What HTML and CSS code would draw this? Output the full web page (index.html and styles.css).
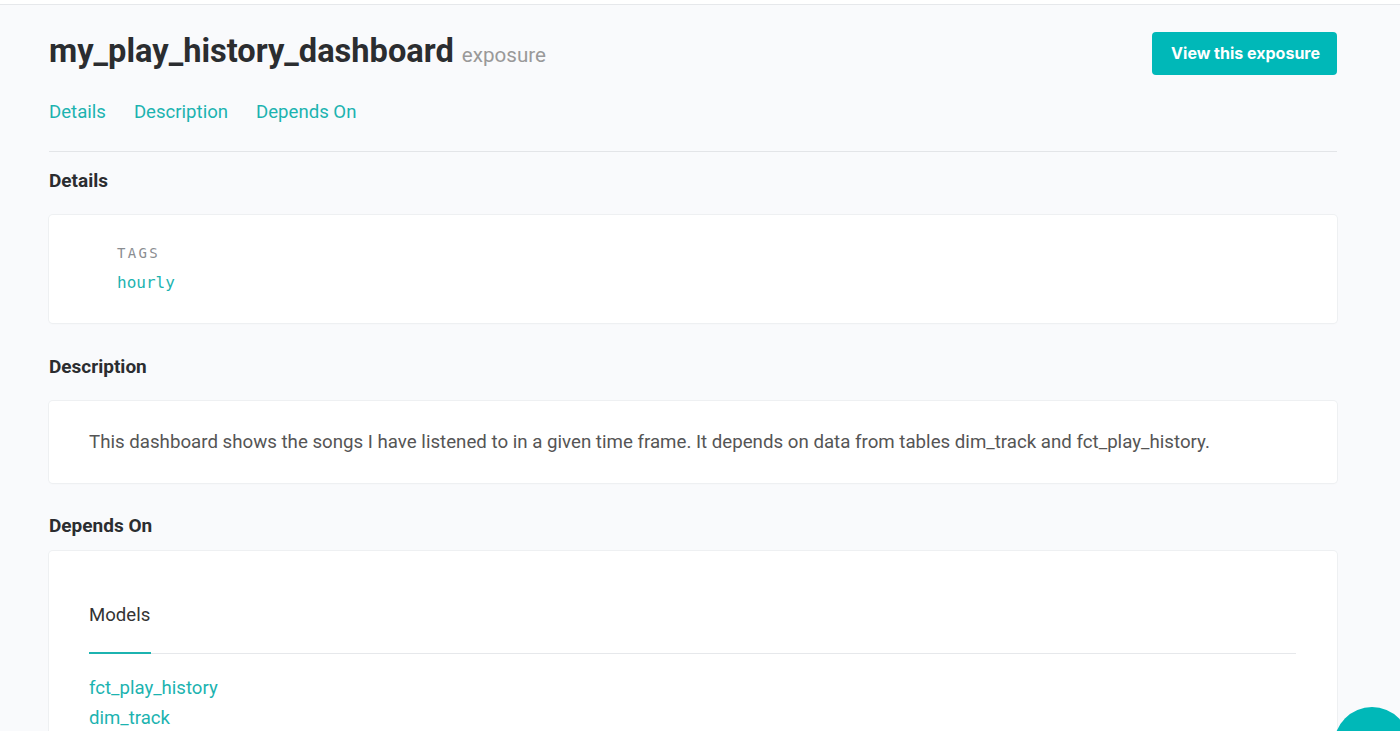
FILE: index.html
```html
<!DOCTYPE html>
<html>
<head>
<meta charset="utf-8">
<link rel="stylesheet" href="styles.css">
</head>
<body>
<div class="topbar"></div>
<main class="page">
  <header class="head">
    <h1 class="title">my_play_history_dashboard <small class="kind">exposure</small></h1>
    <a class="btn">View this exposure</a>
  </header>
  <nav class="tabs">
    <a>Details</a>
    <a>Description</a>
    <a>Depends On</a>
  </nav>
  <section class="sec">
    <h2 class="sec-title">Details</h2>
    <div class="card card-details">
      <div class="detail">
        <div class="label">TAGS</div>
        <div class="value">hourly</div>
      </div>
    </div>
  </section>
  <section class="sec">
    <h2 class="sec-title">Description</h2>
    <div class="card card-desc">
      <p>This dashboard shows the songs I have listened to in a given time frame. It depends on data from tables dim_track and fct_play_history.</p>
    </div>
  </section>
  <section class="sec">
    <h2 class="sec-title">Depends On</h2>
    <div class="card card-deps">
      <div class="subtabs"><span class="subtab active">Models</span></div>
      <ul class="deplist">
        <li><a>fct_play_history</a></li>
        <li><a>dim_track</a></li>
      </ul>
    </div>
  </section>
</main>
<div class="fab"></div>
</body>
</html>
```
FILE: styles.css
```css
* { box-sizing: border-box; }
html, body { margin: 0; padding: 0; }
body {
  background: #f9fafc;
  font-family: Roboto, "Liberation Sans", sans-serif;
  color: #333;
  overflow: hidden;
  height: 731px;
}
.topbar {
  height: 5px;
  background: #fff;
  border-bottom: 1px solid #e6e8eb;
}
.page {
  padding: 0 63px 0 49px;
}
.head {
  display: flex;
  justify-content: space-between;
  align-items: flex-start;
  padding-top: 26px;
}
.title {
  margin: 0;
  font-size: 32.6px;
  font-weight: 700;
  color: #2b2d30;
  line-height: 40px;
}
.kind {
  font-size: 20.6px;
  font-weight: 400;
  color: #999;
}
.btn {
  display: block;
  background: #00b8b8;
  color: #fff;
  font-family: Inter, Roboto, sans-serif;
  font-weight: 700;
  font-size: 16px;
  padding: 0 17px 0 19px;
  height: 43px;
  line-height: 43px;
  border-radius: 4px;
  margin-top: 1px;
}
.tabs {
  display: flex;
  gap: 28px;
  margin-top: 26px;
  padding-bottom: 28px;
  border-bottom: 1px solid #e3e5e8;
}
.tabs a {
  color: #1cb3b0;
  font-size: 18.6px;
  line-height: 22px;
}
.sec-title {
  margin: 0;
  font-size: 19px;
  font-weight: 700;
  color: #2b2d30;
  line-height: 22px;
}
.sec:nth-of-type(1) { padding-top: 18px; }
.sec:nth-of-type(1) .sec-title { margin-bottom: 23px; }
.card {
  background: #fff;
  border-radius: 4px;
  box-shadow: 0 0 0 1px #eef0f2, 0 1px 2px rgba(0,0,0,0.04);
}
.card-details {
  height: 108px;
  padding: 30px 68px;
}
.label {
  font-family: "DejaVu Sans Mono", "Liberation Mono", monospace;
  font-size: 14px;
  letter-spacing: 2.3px;
  color: #8a8d91;
  line-height: 16px;
}
.value {
  font-family: "DejaVu Sans Mono", "Liberation Mono", monospace;
  font-size: 16px;
  color: #1cb3b0;
  margin-top: 12px;
  line-height: 20px;
}
.sec:nth-of-type(2) { padding-top: 33px; }
.sec:nth-of-type(2) .sec-title { margin-bottom: 23px; }
.card-desc {
  height: 82px;
  padding: 0 40px;
  display: flex;
  align-items: center;
}
.card-desc p {
  margin: 0;
  font-size: 18.7px;
  color: #555;
}
.sec:nth-of-type(3) { padding-top: 32px; }
.sec:nth-of-type(3) .sec-title { margin-bottom: 14px; }
.card-deps {
  padding: 53px 41px 20px 40px;
  height: 200px;
}
.subtabs {
  border-bottom: 1px solid #e6e8eb;
  display: flex;
}
.subtab {
  font-size: 18.6px;
  color: #333;
  padding-bottom: 26px;
  line-height: 22px;
  width: 62px;
}
.subtab.active {
  border-bottom: 2px solid #1cb3b0;
  margin-bottom: -1px;
}
.deplist {
  list-style: none;
  margin: 0;
  padding: 19px 0 0;
}
.deplist li {
  font-size: 18.6px;
  line-height: 30px;
}
.deplist a { color: #1cb3b0; }
.fab {
  position: fixed;
  left: 1334px;
  top: 707px;
  width: 76px;
  height: 76px;
  border-radius: 50%;
  background: #00b8b8;
}
```
